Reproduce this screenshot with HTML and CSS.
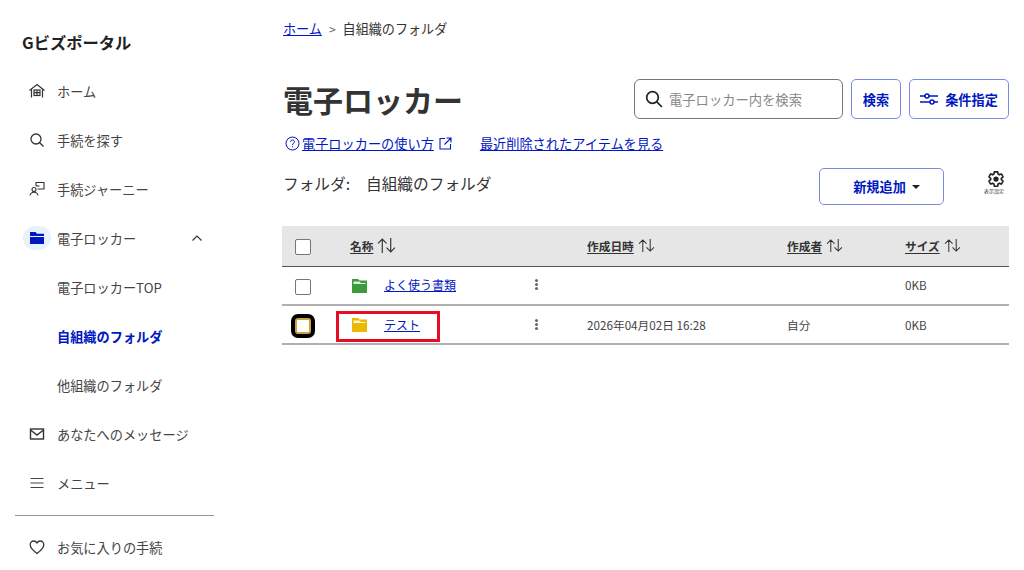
FILE: index.html
```html
<!DOCTYPE html>
<html lang="ja">
<head>
<meta charset="utf-8">
<title>電子ロッカー</title>
<link rel="stylesheet" href="styles.css">
</head>
<body>
<aside class="side">
  <div class="logo">Gビズポータル</div>
  <nav class="nav">
    <a class="item"><span class="ico"><svg width="18" height="18" viewBox="0 0 18 18" fill="none" stroke="#333" stroke-width="1.2"><path d="M1.500 8.500 9 2.500 16.500 8.500M3.500 7.500V15.500M14.500 7.500V15.500"/><rect x="6" y="8" width="6" height="5.500"/><path d="M6 10.700H12M9 8V13.500"/></svg></span>ホーム</a>
    <a class="item"><span class="ico"><svg width="18" height="18" viewBox="0 0 18 18" fill="none" stroke="#333" stroke-width="1.300"><circle cx="8" cy="8" r="5"/><path d="M11.700 11.700 15.500 15.500"/></svg></span>手続を探す</a>
    <a class="item"><span class="ico"><svg width="18" height="18" viewBox="0 0 18 18" fill="none" stroke="#333" stroke-width="1.100"><path d="M8 6V2.500H16V9H9.500"/><path d="M8 6H11.500"/><circle cx="6" cy="9.500" r="2"/><path d="M2 15.500C2.500 13 4 12.300 6 12.300S9.500 13 10 15.500"/></svg></span>手続ジャーニー</a>
    <a class="item"><span class="ico active"><svg width="16" height="14" viewBox="0 0 16 14" fill="#0017c1"><path d="M1 1H6.500L8 2.800H15V5H1Z"/><path d="M1 6H15V13H1Z"/></svg></span>電子ロッカー<svg class="chev" width="14" height="14" viewBox="0 0 14 14" fill="none" stroke="#333" stroke-width="1.200"><path d="M2.500 9.500 7 5l4.500 4.500"/></svg></a>
    <a class="item">電子ロッカーTOP</a>
    <a class="item current">自組織のフォルダ</a>
    <a class="item">他組織のフォルダ</a>
    <a class="item"><span class="ico"><svg width="16" height="14" viewBox="0 0 16 14" fill="none" stroke="#333" stroke-width="1.400"><rect x="1.500" y="2" width="13" height="10"/><path d="M1.500 3 8 8l6.500-5"/></svg></span>あなたへのメッセージ</a>
    <a class="item"><span class="ico"><svg width="16" height="14" viewBox="0 0 16 14" fill="none" stroke="#444" stroke-width="1.200"><path d="M1.500 2.500H14.500M1.500 7H14.500M1.500 11.500H14.500"/></svg></span>メニュー</a>
  </nav>
  <hr class="rule">
  <a class="item"><span class="ico"><svg width="18" height="18" viewBox="0 0 18 18" fill="none" stroke="#333" stroke-width="1.300"><path d="M9 15.500C5 12.500 2.200 10 2.200 6.800 2.200 4.500 4 3 5.800 3 7.200 3 8.300 3.700 9 5 9.700 3.700 10.800 3 12.200 3 14 3 15.800 4.500 15.800 6.800 15.800 10 13 12.500 9 15.500Z"/></svg></span>お気に入りの手続</a>
</aside>

<main class="main">
  <div class="crumbs"><a class="link">ホーム</a><span class="sep">&gt;</span><span>自組織のフォルダ</span></div>

  <div class="head">
    <h1 class="title">電子ロッカー</h1>
    <div class="tools">
      <div class="search">
        <svg width="20" height="20" viewBox="0 0 20 20" fill="none" stroke="#222" stroke-width="1.700"><circle cx="8.500" cy="8.500" r="5.800"/><path d="M12.800 12.800 18 18"/></svg>
        <span class="ph">電子ロッカー内を検索</span>
      </div>
      <button class="btn btn-search">検索</button>
      <button class="btn btn-filter"><svg width="18" height="12" viewBox="0 0 18 12" fill="none" stroke="#0017c1" stroke-width="1.500"><path d="M0 3H5M9 3H18M0 9H10M14 9H18"/><circle cx="7" cy="3" r="2"/><circle cx="12" cy="9" r="2"/></svg>条件指定</button>
    </div>
  </div>

  <div class="links">
    <svg class="q" width="15" height="15" viewBox="0 0 15 15" fill="none" stroke="#0017c1" stroke-width="1"><circle cx="7.500" cy="7.500" r="6.500"/><path d="M5.500 5.800C5.500 4.600 6.500 4 7.500 4S9.500 4.700 9.500 5.800C9.500 7.200 7.500 7.200 7.500 9"/><path d="M7.500 10.200V11.200"/></svg>
    <a class="link">電子ロッカーの使い方</a>
    <svg class="ext" width="13" height="13" viewBox="0 0 13 13" fill="none" stroke="#0017c1" stroke-width="1.100"><path d="M6 1.500H1V12H11.500V7M7.500 1H12V5.500M12 1 5.500 7.500"/></svg>
    <a class="link second">最近削除されたアイテムを見る</a>
  </div>

  <div class="folder-row">
    <div class="folder-label"><span class="fl">フォルダ:</span><span>自組織のフォルダ</span></div>
    <button class="btn btn-add">新規追加<i class="caret"></i></button>
    <div class="gear">
      <svg width="18" height="18" viewBox="0 0 24 24" fill="none" stroke="#222" stroke-width="2.200"><path d="M19.140 12.940c.04-.3.06-.61.06-.94 0-.32-.02-.64-.07-.94l2.030-1.580a.49.49 0 0 0 .12-.61l-1.920-3.320a.488.488 0 0 0-.59-.22l-2.390.96c-.5-.38-1.030-.7-1.620-.94l-.36-2.540a.484.484 0 0 0-.48-.41h-3.840c-.24 0-.43.17-.47.41l-.36 2.540c-.59.24-1.130.57-1.620.94l-2.390-.96c-.22-.08-.47 0-.59.22L2.740 8.870c-.12.21-.08.47.12.61l2.030 1.580c-.05.3-.09.63-.09.94s.02.64.07.94l-2.030 1.580a.49.49 0 0 0-.12.61l1.920 3.320c.12.22.37.29.59.22l2.390-.96c.5.38 1.030.7 1.620.94l.36 2.540c.05.24.24.41.48.41h3.840c.24 0 .44-.17.47-.41l.36-2.540c.59-.24 1.130-.56 1.620-.94l2.390.96c.22.08.47 0 .59-.22l1.920-3.320c.12-.22.07-.47-.12-.61l-2.010-1.580z"/><circle cx="12" cy="12" r="3.500" fill="#222" stroke="none"/></svg>
      <span class="gear-t">表示設定</span>
    </div>
  </div>

  <table class="tbl">
    <thead>
      <tr>
        <th class="c-check"><i class="cb"></i></th>
        <th class="c-name"><span class="sort"><u>名称</u><svg class="arr big" viewBox="0 0 18 14" fill="none" stroke="#333" stroke-width="1.100"><path d="M5 14V1M1 5l4-4 4 4M13 0V13M9 9l4 4 4-4"/></svg></span></th>
        <th class="c-menu"></th>
        <th class="c-date"><span class="sort"><u>作成日時</u><svg class="arr" viewBox="0 0 18 14" fill="none" stroke="#333" stroke-width="1.100"><path d="M5 14V1M1 5l4-4 4 4M13 0V13M9 9l4 4 4-4"/></svg></span></th>
        <th class="c-user"><span class="sort"><u>作成者</u><svg class="arr" viewBox="0 0 18 14" fill="none" stroke="#333" stroke-width="1.100"><path d="M5 14V1M1 5l4-4 4 4M13 0V13M9 9l4 4 4-4"/></svg></span></th>
        <th class="c-size"><span class="sort"><u>サイズ</u><svg class="arr" viewBox="0 0 18 14" fill="none" stroke="#333" stroke-width="1.100"><path d="M5 14V1M1 5l4-4 4 4M13 0V13M9 9l4 4 4-4"/></svg></span></th>
      </tr>
    </thead>
    <tbody>
      <tr class="first">
        <td class="c-check"><i class="cb"></i></td>
        <td class="c-name"><span class="file"><svg width="15" height="14" viewBox="0 0 15 14"><path d="M0 0H6L7.500 1.500H15V14H0Z" fill="#3d9a3d"/><path d="M1.500 2.500H7.500L9 4H13.500V5H1.500Z" fill="#dff0df"/></svg><a class="link">よく使う書類</a></span></td>
        <td class="c-menu"><i class="dots"></i></td>
        <td></td><td></td><td>0KB</td>
      </tr>
      <tr>
        <td class="c-check"><i class="cb focus"></i></td>
        <td class="c-name mark-cell"><span class="file"><svg width="15" height="14" viewBox="0 0 15 14"><path d="M0 0H6L7.500 1.500H15V14H0Z" fill="#ecb800"/><path d="M1.500 2.500H7.500L9 4H13.500V5H1.500Z" fill="#fff6d6"/></svg><a class="link">テスト</a></span><span class="mark"></span></td>
        <td class="c-menu"><i class="dots"></i></td>
        <td>2026年04月02日 16:28</td><td>自分</td><td>0KB</td>
      </tr>
    </tbody>
  </table>
</main>
</body>
</html>
```
FILE: styles.css
```css
* { box-sizing: border-box; }
html, body { margin: 0; height: 100%; overflow: hidden; }
body {
  display: flex;
  background: #fff;
  color: #333;
  font-family: "Noto Sans CJK JP", "Noto Sans", sans-serif;
  font-size: 13.2px;
}
.side { width: 282px; flex: none; padding: 31px 0 0 15px; }
.logo { font-size: 16.300px; font-weight: 700; line-height: 22px; padding-left: 7px; margin-bottom: 14px; color: #222; }
.nav { display: flex; flex-direction: column; width: 199px; }
.item { display: flex; align-items: center; height: 49px; padding-left: 42px; position: relative; color: #444; white-space: nowrap; }
.ico { position: absolute; left: 8px; top: 12px; width: 28px; height: 24px; display: flex; align-items: center; justify-content: center; }
.ico.active { background: #e8f1fe; border-radius: 12px; }
.chev { position: absolute; left: 175px; top: 17px; }
.current { color: #0017c1; font-weight: 700; }
.rule { width: 199px; margin: 7px 0 7px; border: 0; border-top: 1px solid #949494; }
.main { width: 727px; padding-top: 18px; }
.link { color: #0017c1; text-decoration: underline; }
.crumbs { display: flex; align-items: center; height: 20px; padding-left: 1px; font-size: 13.100px; color: #333; }
.sep { margin: 0 7px; color: #666; font-size: 12px; }
.head { display: flex; justify-content: space-between; align-items: center; margin-top: 41px; height: 40px; padding-left: 1px; }
.title { margin: 0; font-size: 30px; font-weight: 700; line-height: 40px; color: #333; }
.tools { display: flex; gap: 8px; }
.search { width: 209px; height: 40px; border: 1px solid #767676; border-radius: 6px; display: flex; align-items: center; gap: 5px; padding-left: 9px; }
.ph { color: #888; font-size: 13.300px; }
.btn { font-family: inherit; font-weight: 700; font-size: 13.200px; color: #0017c1; background: #fff; border: 1px solid #7d8ae4; border-radius: 5px; display: flex; align-items: center; justify-content: center; }
.btn-search { width: 50px; height: 40px; padding: 0; }
.btn-filter { width: 100px; height: 40px; padding: 0; gap: 7px; }
.links { display: flex; align-items: center; height: 20px; margin-top: 14px; font-size: 13.200px; padding-left: 3px; }
.q { margin-right: 2px; }
.ext { margin-left: 5px; }
.second { margin-left: 28px; }
.folder-row { display: flex; align-items: center; height: 38px; margin-top: 14px; }
.folder-label { display: flex; flex: none; width: 537px; padding-left: 1px; font-size: 15.700px; color: #333; margin-top: -5px; }
.fl { width: 83px; }
.btn-add { width: 125px; height: 37px; margin-top: 1px; padding: 0 0 0 10px; gap: 6px; font-size: 13.200px; }
.caret { width: 0; height: 0; border: 4px solid transparent; border-top: 4px solid #222; border-bottom: 0; }
.gear { width: 65px; margin-top: -8px; display: flex; flex-direction: column; align-items: flex-end; padding-right: 4px; color: #333; }
.gear-t { font-size: 5px; line-height: 6px; transform: translateX(-1px); }
.tbl { width: 727px; table-layout: fixed; border-collapse: collapse; margin-top: 21px; }
.tbl th { height: 40px; background: #e6e6e6; border-bottom: 1px solid #555; text-align: left; font-weight: 700; font-size: 11.700px; padding: 0; }
.tbl td { height: 39px; border-bottom: 2px solid #b0b0b0; font-size: 11.700px; padding: 0 0 1px; color: #444; }
.c-check { width: 68px; }
.c-name { width: 186px; }
.c-menu { width: 51px; }
.c-date { width: 200px; }
.c-user { width: 118px; }
.c-size { width: 104px; }
.cb { display: block; width: 16px; height: 16px; margin: 2px 0 0 13px; border: 1.500px solid #767676; border-radius: 2px; background: #fff; }
.first .cb { margin-top: 5px; }
.cb.focus { border: 2px solid #c9a63c; box-shadow: 0 0 0 4px #000; border-radius: 3px; margin-top: 3px; }
.sort { display: flex; align-items: center; gap: 4px; color: #333; }
.sort u { text-underline-offset: 2px; }
.arr { width: 17px; height: 13px; }
.arr.big { width: 19px; height: 15px; }
.file { display: flex; align-items: center; gap: 17px; padding-left: 2px; font-size: 12px; }
.file svg { margin-top: 2px; }
.dots { display: block; width: 3px; height: 3px; margin-left: -1px; border-radius: 50%; background: #666; box-shadow: 0 -4px 0 #666, 0 4px 0 #666; }
.mark-cell { position: relative; }
.mark { position: absolute; left: -14px; top: 5px; width: 104px; height: 31px; border: 3px solid #e60d23; pointer-events: none; }
```
